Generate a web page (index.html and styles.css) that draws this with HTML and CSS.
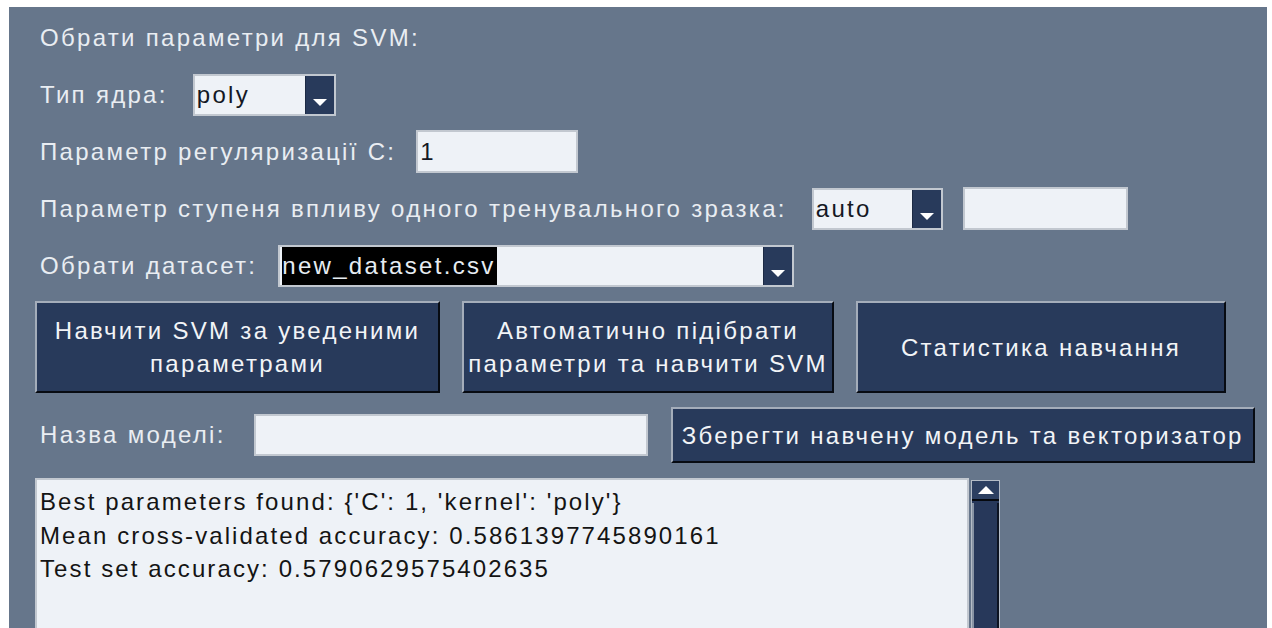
FILE: index.html
```html
<!DOCTYPE html>
<html lang="uk">
<head>
<meta charset="utf-8">
<title>SVM</title>
<link rel="stylesheet" href="styles.css">
</head>
<body>
<main class="panel">
  <div class="row">
    <span class="label">Обрати параметри для SVM:</span>
  </div>

  <div class="row">
    <span class="label">Тип ядра:</span>
    <div class="combo combo-kernel">
      <span class="combo-value">poly</span>
      <span class="combo-btn"><svg width="14" height="7" viewBox="0 0 14 7"><polygon points="0,0 14,0 7,7" fill="#fff"/></svg></span>
    </div>
  </div>

  <div class="row">
    <span class="label label-c">Параметр регуляризації C:</span>
    <div class="entry entry-c">1</div>
  </div>

  <div class="row">
    <span class="label">Параметр ступеня впливу одного тренувального зразка:</span>
    <div class="combo combo-gamma">
      <span class="combo-value">auto</span>
      <span class="combo-btn"><svg width="14" height="7" viewBox="0 0 14 7"><polygon points="0,0 14,0 7,7" fill="#fff"/></svg></span>
    </div>
    <div class="entry entry-gamma"></div>
  </div>

  <div class="row">
    <span class="label label-dataset">Обрати датасет:</span>
    <div class="combo combo-dataset">
      <span class="combo-value"><span class="selected">new_dataset.csv</span></span>
      <span class="combo-btn"><svg width="14" height="7" viewBox="0 0 14 7"><polygon points="0,0 14,0 7,7" fill="#fff"/></svg></span>
    </div>
  </div>

  <div class="row row-actions">
    <button class="btn btn-train">Навчити SVM за уведеними<br>параметрами</button>
    <button class="btn btn-auto">Автоматично підібрати<br>параметри та навчити SVM</button>
    <button class="btn btn-stats">Статистика навчання</button>
  </div>

  <div class="row row-save">
    <span class="label label-name">Назва моделі:</span>
    <div class="entry entry-name"></div>
    <button class="btn btn-save">Зберегти навчену модель та векторизатор</button>
  </div>

  <div class="output-row">
    <div class="output">
      <div>Best parameters found: {'C': 1, 'kernel': 'poly'}</div>
      <div>Mean cross-validated accuracy: 0.5861397745890161</div>
      <div>Test set accuracy: 0.5790629575402635</div>
    </div>
    <div class="scrollbar">
      <span class="scroll-up"><svg width="16" height="8" viewBox="0 0 16 8"><polygon points="0,8 16,8 8,0" fill="#fff"/></svg></span>
      <span class="scroll-trough"></span>
    </div>
  </div>
</main>
</body>
</html>
```

FILE: styles.css
```css
* {
  box-sizing: border-box;
}

html,
body {
  margin: 0;
  height: 100%;
  background: #ffffff;
}

body {
  padding: 7px 5px 0 9px;
  overflow: hidden;
  font-family: "Liberation Sans", Arial, sans-serif;
  font-size: 24px;
  letter-spacing: 2.3px;
}

.panel {
  height: 621px;
  background: #66768b;
  padding: 9px 0 0 26px;
  display: flex;
  flex-direction: column;
  gap: 14px;
  overflow: hidden;
}

.row {
  display: flex;
  align-items: center;
  height: 43px;
  flex-shrink: 0;
}

.label {
  color: #e9edf2;
  padding-left: 5px;
  margin-right: 25px;
  white-space: nowrap;
}

.label-c {
  margin-right: 20px;
}

.label-dataset {
  margin-right: 21px;
}

.label-name {
  margin-right: 28px;
}

/* combobox: white field with a dark drop-down button */
.combo {
  display: flex;
  height: 42px;
  border: 2px solid #c2c8d0;
  background: #eef2f7;
}

.combo-value {
  flex: 1;
  padding-left: 2px;
  color: #141824;
  line-height: 38px;
  white-space: nowrap;
  overflow: hidden;
}

.combo-btn {
  width: 29px;
  flex-shrink: 0;
  background: #283a5b;
  border-left: 1px solid #1c2a44;
  display: flex;
  align-items: flex-end;
  justify-content: center;
  padding-bottom: 8px;
}

.combo-kernel {
  width: 143px;
}

.combo-gamma {
  width: 131px;
}

.combo-dataset {
  width: 516px;
}

.selected {
  display: inline-block;
  background: #000000;
  color: #e6ecf2;
  line-height: 38px;
  padding-right: 1px;
}

/* text entries */
.entry {
  height: 43px;
  border: 2px solid #c2c8d0;
  background: #eef2f7;
  color: #141824;
  line-height: 39px;
  padding-left: 2px;
}

.entry-c {
  width: 162px;
}

.entry-gamma {
  width: 165px;
  margin-left: 20px;
}

.entry-name {
  width: 394px;
  height: 42px;
}

/* raised buttons */
.btn {
  font: inherit;
  letter-spacing: inherit;
  color: #f2f4f7;
  background: #283a5b;
  border-style: solid;
  border-width: 2px;
  border-color: #a4adba #070b12 #070b12 #a4adba;
  line-height: 33px;
  padding: 0;
  text-align: center;
}

.row-actions {
  height: 92px;
  gap: 22px;
}

.row-actions .btn {
  height: 92px;
}

.btn-train {
  width: 405px;
}

.btn-auto {
  width: 372px;
}

.btn-stats {
  width: 370px;
}

.row-save {
  height: 56px;
}

.btn-save {
  width: 584px;
  height: 56px;
  margin-left: 23px;
}

/* output text area with its vertical scrollbar */
.output-row {
  display: flex;
  gap: 2px;
  margin-top: 1px;
  flex: 1;
}

.output {
  width: 934px;
  background: #eef2f7;
  border: 2px solid #c2c8d0;
  border-bottom: none;
  padding: 5px 3px;
  line-height: 33.5px;
  letter-spacing: 2.1px;
  color: #141414;
  white-space: nowrap;
}

.scrollbar {
  width: 29px;
  margin-top: 2px;
  border: 1px solid #b4bcc7;
  border-bottom: none;
  background: #27385a;
  display: flex;
  flex-direction: column;
}

.scroll-up {
  height: 20px;
  background: #2c3f61;
  border-bottom: 2px solid #05080e;
  display: flex;
  align-items: center;
  justify-content: center;
}

.scroll-trough {
  flex: 1;
  margin-top: 2px;
  border-left: 2px solid #8793a4;
  border-right: 2px solid #0c1322;
}
```
